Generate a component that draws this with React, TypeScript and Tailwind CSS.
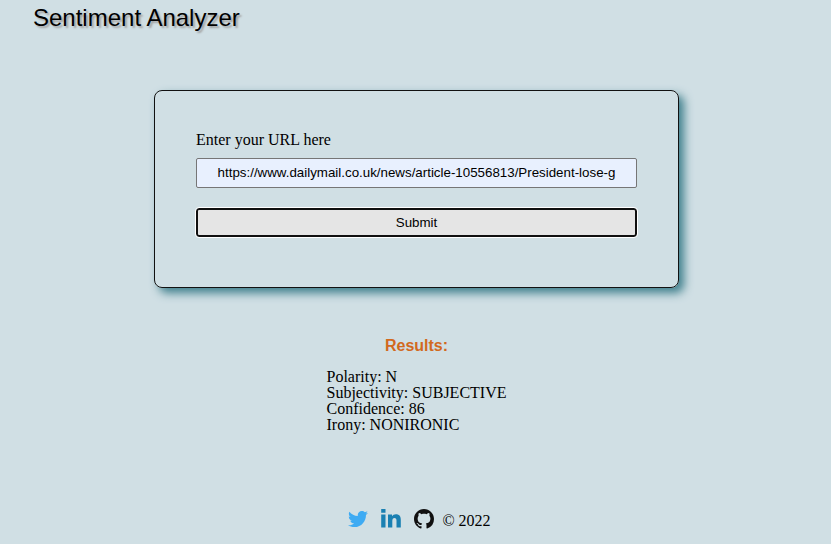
import React, { useState } from "react";
import { FaTwitter } from "react-icons/fa";

const results = [
  { name: "Polarity", value: "N" },
  { name: "Subjectivity", value: "SUBJECTIVE" },
  { name: "Confidence", value: "86" },
  { name: "Irony", value: "NONIRONIC" },
];

function LinkedinMark() {
  return (
    <svg viewBox="0 0 20 20" className="size-5" fill="currentColor" aria-hidden="true">
      <path d="M0.2 0h4.3v3.8H0.2zM0.2 5.6h4.3V18.4H0.2zM7 5.6h4v1.7c.8-1.3 2.1-2 3.9-2 3.5 0 4.9 2.2 4.9 5.5V18.4h-4.3v-6.6c0-1.8-.6-2.8-2-2.8-1.5 0-2.2 1.1-2.2 2.8V18.4H7z" />
    </svg>
  );
}

function GithubMark() {
  return (
    <svg viewBox="0 0 16 16" className="size-5" fill="currentColor" aria-hidden="true">
      <path d="M8 0C3.58 0 0 3.58 0 8c0 3.54 2.29 6.53 5.47 7.59.4.07.55-.17.55-.38 0-.19-.01-.82-.01-1.49-2.01.37-2.53-.49-2.69-.94-.09-.23-.48-.94-.82-1.13-.28-.15-.68-.52-.01-.53.63-.01 1.08.58 1.23.82.72 1.21 1.87.87 2.33.66.07-.52.28-.87.51-1.07-1.78-.2-3.64-.89-3.64-3.95 0-.87.31-1.59.82-2.15-.08-.2-.36-1.02.08-2.12 0 0 .67-.21 2.2.82.64-.18 1.32-.27 2-.27s1.36.09 2 .27c1.53-1.04 2.2-.82 2.2-.82.44 1.1.16 1.92.08 2.12.51.56.82 1.27.82 2.15 0 3.07-1.87 3.75-3.65 3.95.29.25.54.73.54 1.48 0 1.07-.01 1.93-.01 2.2 0 .21.15.46.55.38A8.01 8.01 0 0 0 16 8c0-4.42-3.58-8-8-8z" />
    </svg>
  );
}

export default function App() {
  const [url, setUrl] = useState(
    "https://www.dailymail.co.uk/news/article-10556813/President-lose-g",
  );

  return (
    <div className="flex min-h-screen flex-col bg-[#d0dfe4] font-['Liberation_Serif',serif] text-base text-black">
      <header className="px-[33px] pt-1">
        <h1 className="font-['Liberation_Sans',sans-serif] text-2xl leading-7 [text-shadow:2px_2px_2px_#a0a0a0]">
          Sentiment Analyzer
        </h1>
      </header>

      <main className="flex flex-col items-center pt-[58px] pr-4 pl-[18px]">
        <form
          onSubmit={(e) => e.preventDefault()}
          className="flex w-full max-w-[525px] flex-col rounded-lg border border-[#111] px-[41px] pt-10 pb-[50px] shadow-[5px_5px_10px_#3f7f8c]"
        >
          <label htmlFor="url" className="leading-[18px]">
            Enter your URL here
          </label>
          <input
            id="url"
            type="text"
            value={url}
            onChange={(e) => setUrl(e.target.value)}
            className="mt-[9px] h-[30px] rounded-xs border border-[#767676] bg-[#e8f0fe] px-5 pb-0.5 text-center font-['Liberation_Sans',sans-serif] [font-size:smaller]"
          />
          <button
            type="submit"
            className="mt-5 h-[29px] rounded-[3px] border-2 border-[#101010] bg-[#e5e5e5] font-['Liberation_Sans',sans-serif] leading-4 outline outline-white [font-size:smaller]"
          >
            Submit
          </button>
        </form>

        <section className="flex flex-col items-center pt-[49px]">
          <h2 className="font-['Liberation_Sans',sans-serif] font-bold leading-[18px] text-[#d2691e]">
            Results:
          </h2>
          <ul className="pt-[14px] leading-4">
            {results.map((r) => (
              <li key={r.name}>
                {r.name}: {r.value}
              </li>
            ))}
          </ul>
        </section>
      </main>

      <footer className="flex items-center justify-center pt-[75px] pb-3 pl-2">
        <div className="flex items-center gap-[13px]">
          <a href="#twitter" aria-label="Twitter" className="text-[#3eabf3]">
            <FaTwitter size={20} />
          </a>
          <a href="#linkedin" aria-label="LinkedIn" className="text-[#1a80b2]">
            <LinkedinMark />
          </a>
          <a href="#github" aria-label="GitHub" className="text-[#101010]">
            <GithubMark />
          </a>
        </div>
        <p className="pt-1 pl-2 leading-[18px]">© 2022</p>
      </footer>
    </div>
  );
}
